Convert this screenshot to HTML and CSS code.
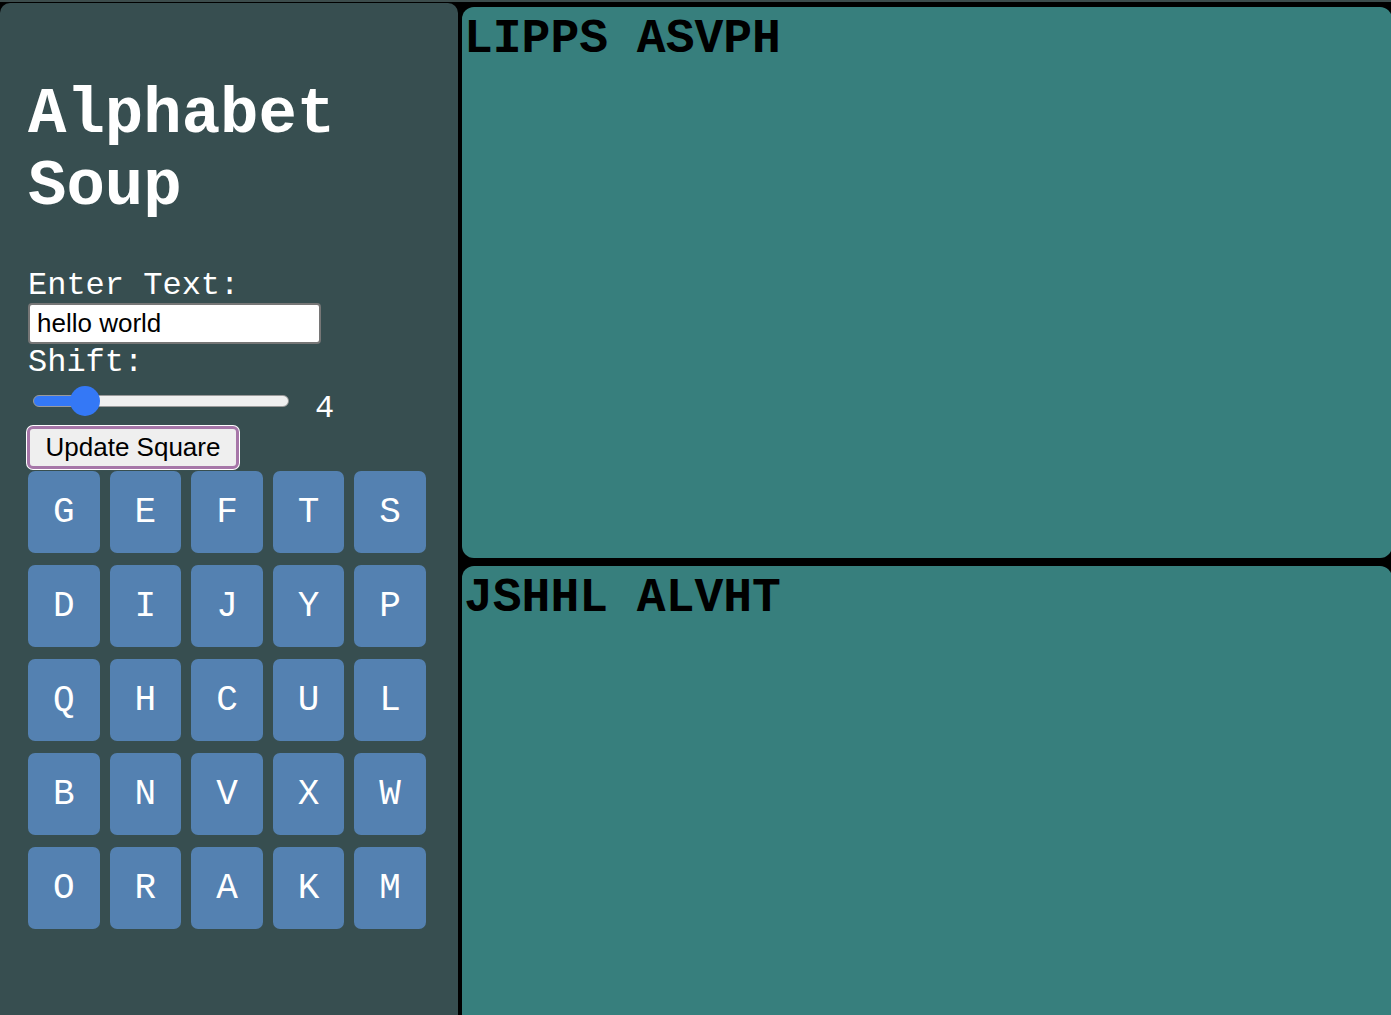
FILE: index.html
```html
<!DOCTYPE html>
<html lang="en">
<head>
<meta charset="utf-8">
<title>Alphabet Soup</title>
<link rel="stylesheet" href="styles.css">
</head>
<body>
<div class="app">
  <aside class="sidebar">
    <h1 class="title">Alphabet Soup</h1>
    <div class="label">Enter Text:</div>
    <input class="text-input" type="text" value="hello world">
    <div class="label">Shift:</div>
    <div class="shift-row">
      <input class="slider" type="range" min="0" max="25" value="4">
      <span class="shift-value">4</span>
    </div>
    <button class="update-btn" type="button">Update Square</button>
    <div class="square">
      <div class="tile">G</div><div class="tile">E</div><div class="tile">F</div><div class="tile">T</div><div class="tile">S</div>
      <div class="tile">D</div><div class="tile">I</div><div class="tile">J</div><div class="tile">Y</div><div class="tile">P</div>
      <div class="tile">Q</div><div class="tile">H</div><div class="tile">C</div><div class="tile">U</div><div class="tile">L</div>
      <div class="tile">B</div><div class="tile">N</div><div class="tile">V</div><div class="tile">X</div><div class="tile">W</div>
      <div class="tile">O</div><div class="tile">R</div><div class="tile">A</div><div class="tile">K</div><div class="tile">M</div>
    </div>
  </aside>
  <main class="output">
    <section class="panel">LIPPS ASVPH</section>
    <section class="panel">JSHHL ALVHT</section>
  </main>
</div>
</body>
</html>
```
FILE: styles.css
```css
html {
  background: #3c4c4c;
  overflow: hidden;
}
body {
  margin: 0;
  margin-top: 2px;
  background: #000;
  height: 1013px;
  overflow: hidden;
  font-family: "Courier New", "Nimbus Mono PS", "FreeMono", "Liberation Mono", monospace;
}
.app {
  display: grid;
  grid-template-columns: 458px 930px;
  column-gap: 4px;
  padding-top: 1px;
}
.sidebar {
  background: #374e50;
  border-radius: 10px 10px 0 0;
  padding: 33px 28px 40px 28px;
  height: 1100px;
  box-sizing: border-box;
  color: #fff;
}
.title {
  font-family: "Courier New", "Nimbus Mono PS", "FreeMono", "Liberation Mono", monospace;
  font-weight: bold;
  font-size: 64px;
  line-height: normal;
  margin: 43px 0 45px 0;
  color: #fff;
}
.label {
  font-size: 32px;
  line-height: 36px;
  color: #fff;
}
.text-input {
  display: block;
  box-sizing: border-box;
  width: 293px;
  height: 41px;
  margin: -1px 0 1px 0;
  padding: 0 7px;
  border: 2px solid #767676;
  border-radius: 4px;
  background: #fff;
  font-family: "Liberation Sans", Arial, sans-serif;
  font-size: 26px;
  color: #000;
}
.shift-row {
  display: flex;
  align-items: flex-start;
  height: 46px;
}
.slider {
  -webkit-appearance: none;
  appearance: none;
  width: 256px;
  height: 30px;
  margin: 5px 0 0 5px;
  padding: 0;
  background: transparent;
}
.slider::-webkit-slider-runnable-track {
  height: 12px;
  border: 1px solid #9a9a9a;
  border-radius: 7px;
  background: linear-gradient(to right, #3478f6 0, #3478f6 50px, #efefef 50px);
}
.slider::-webkit-slider-thumb {
  -webkit-appearance: none;
  appearance: none;
  width: 30px;
  height: 30px;
  margin-top: -10px;
  border-radius: 50%;
  background: #3478f6;
  border: none;
}
.shift-value {
  font-size: 32px;
  line-height: 36px;
  margin: 10px 0 0 26px;
  color: #fff;
}
.update-btn {
  display: block;
  box-sizing: border-box;
  width: 212px;
  height: 43px;
  margin: -1px 0 2px -1px;
  padding: 0 12px;
  border: 3px solid #a676a8;
  border-radius: 6px;
  box-shadow: 0 0 0 1px #ffffff;
  background: #efefef;
  font-family: "Liberation Sans", Arial, sans-serif;
  font-size: 26px;
  color: #000;
  text-align: center;
}
.square {
  display: grid;
  grid-template-columns: repeat(5, 71.6px);
  grid-auto-rows: 82px;
  column-gap: 10px;
  row-gap: 12px;
}
.tile {
  background: #5481b1;
  border-radius: 7px;
  display: flex;
  align-items: center;
  justify-content: center;
  font-size: 36px;
  color: #fff;
}
.output {
  display: flex;
  flex-direction: column;
  gap: 8px;
  padding-top: 4px;
}
.panel {
  background: #377f7d;
  border-radius: 12px;
  height: 551px;
  flex: none;
  box-sizing: border-box;
  padding: 5px 2px;
  font-family: "Courier New", "Nimbus Mono PS", "FreeMono", "Liberation Mono", monospace;
  font-weight: bold;
  font-size: 48px;
  line-height: normal;
  color: #000;
}
```
